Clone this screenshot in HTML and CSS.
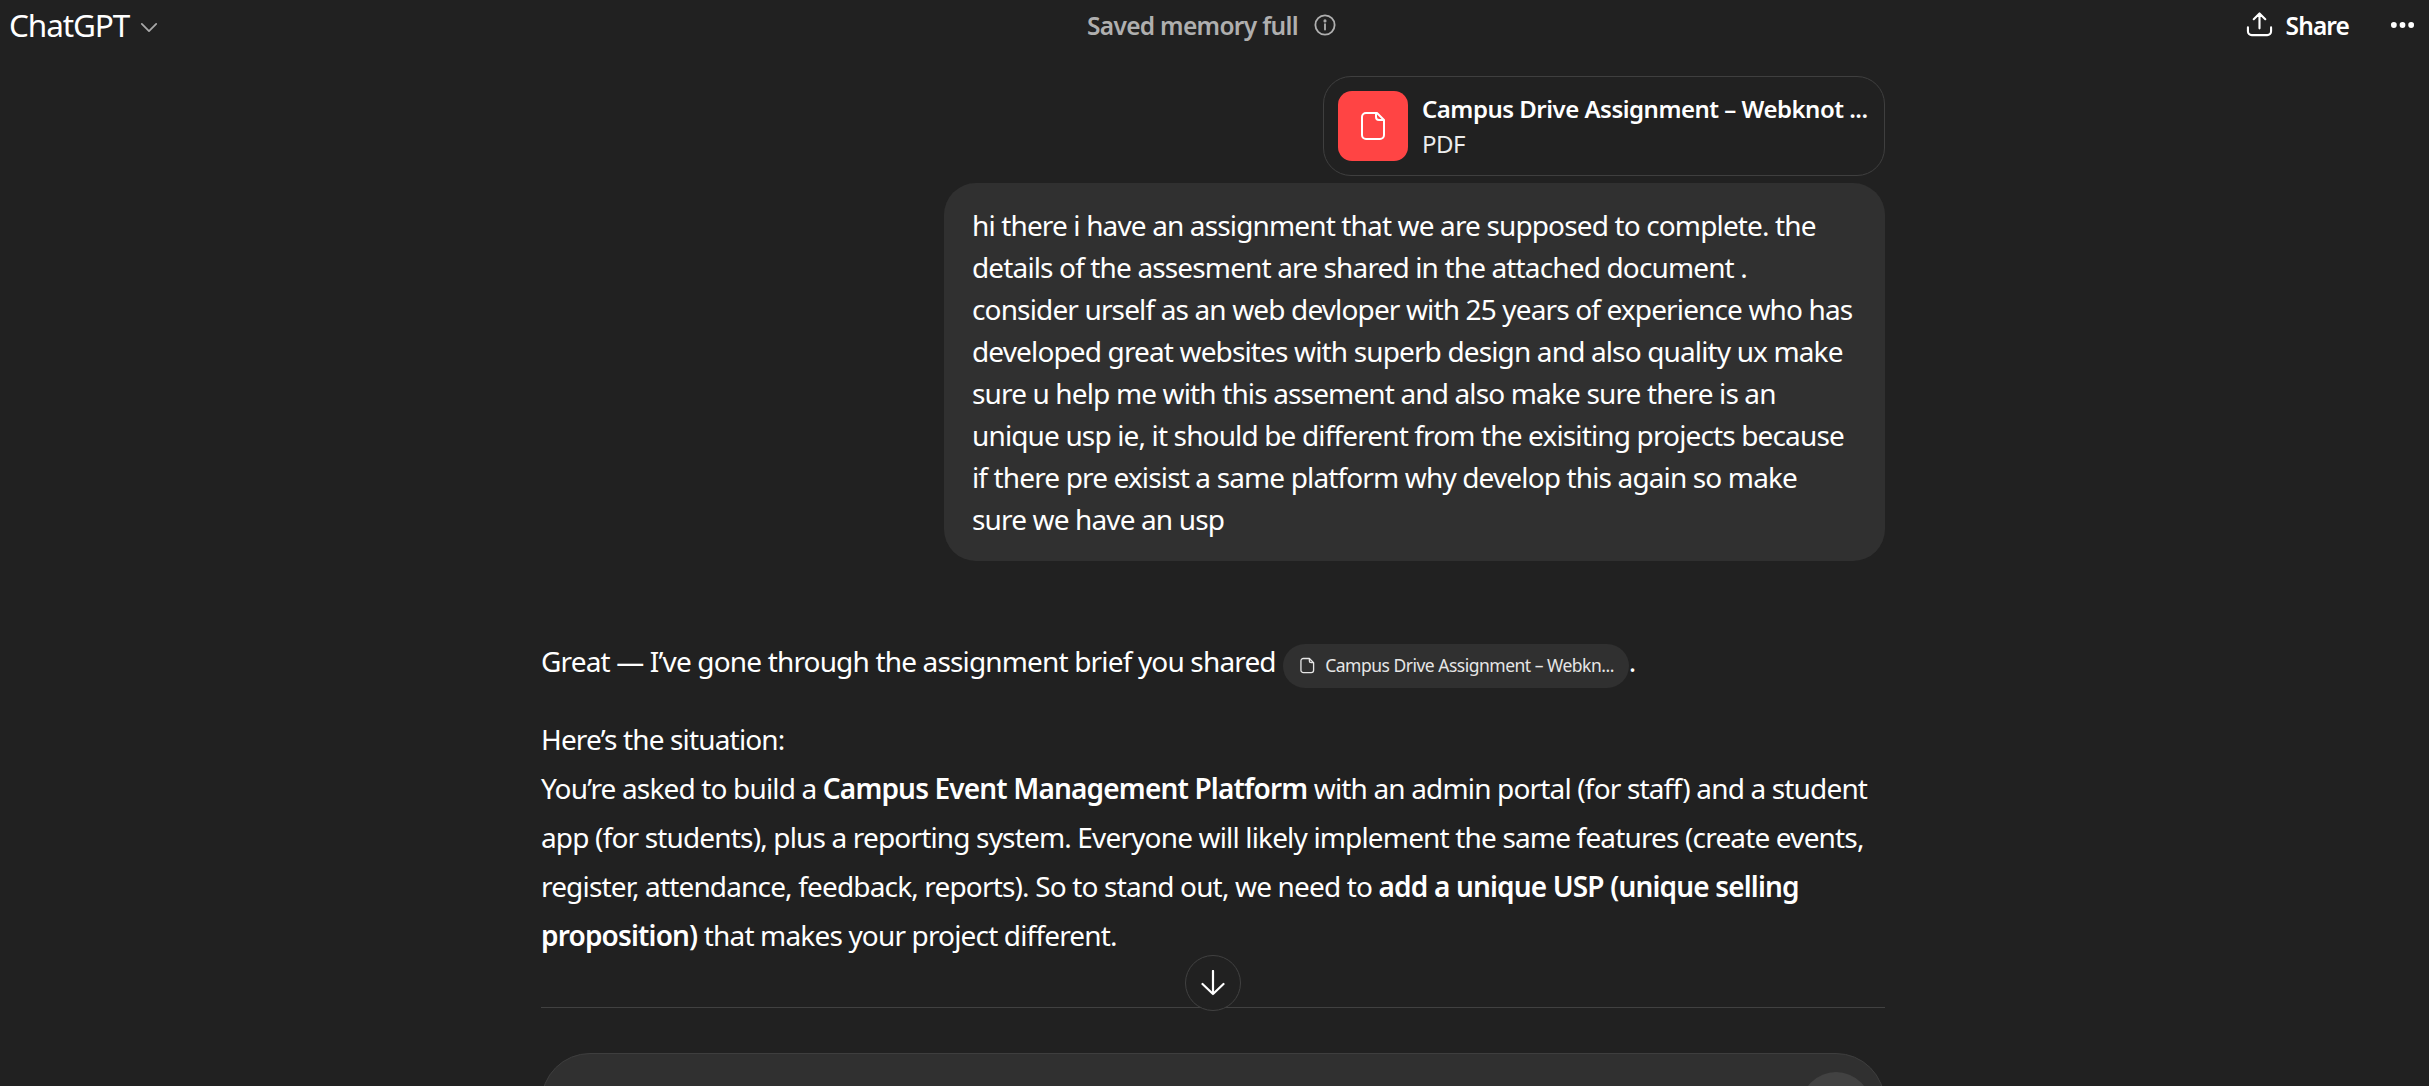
FILE: index.html
```html
<!DOCTYPE html>
<html lang="en">
<head>
<meta charset="utf-8">
<title>ChatGPT</title>
<link rel="stylesheet" href="styles.css">
</head>
<body>
<header class="topbar">
  <div class="model">
    <span>ChatGPT</span>
    <svg class="chevron" viewBox="0 0 20 12" fill="none" stroke="currentColor" stroke-width="2" stroke-linecap="round" stroke-linejoin="round"><path d="M2 2l8 8 8-8"/></svg>
  </div>
  <div class="memory">
    <span>Saved memory full</span>
    <svg class="info" viewBox="0 0 24 24" fill="none" stroke="currentColor" stroke-width="2" stroke-linecap="round"><circle cx="12" cy="12" r="10.500"/><path d="M12 11v6"/><circle cx="12" cy="7.500" r=".7" fill="currentColor"/></svg>
  </div>
  <div class="actions">
    <svg class="share-icon" viewBox="0 0 28 28" fill="none" stroke="currentColor" stroke-width="2.200" stroke-linecap="round" stroke-linejoin="round"><path d="M14 18V3M8 8.500L14 2.500l6 6M2 17v4a4 4 0 0 0 4 4h16a4 4 0 0 0 4-4v-4"/></svg>
    <span class="share">Share</span>
    <svg class="dots" viewBox="0 0 26 8" fill="currentColor"><circle cx="4" cy="4" r="3"/><circle cx="13" cy="4" r="3"/><circle cx="22" cy="4" r="3"/></svg>
  </div>
</header>
<main class="thread">
  <section class="user">
    <div class="attachment">
      <div class="file-badge">
        <svg viewBox="0 0 26 30" fill="none" stroke="#fff" stroke-width="2" stroke-linejoin="round"><path d="M6 2h11l7 7v15a4 4 0 0 1-4 4H6a4 4 0 0 1-4-4V6a4 4 0 0 1 4-4z"/><path d="M16 2v4a3 3 0 0 0 3 3h5"/></svg>
      </div>
      <div class="file-meta">
        <div class="file-name">Campus Drive Assignment – Webknot ...</div>
        <div class="file-type">PDF</div>
      </div>
    </div>
    <div class="bubble">hi there i have an assignment that we are supposed to complete. the<br>details of the assesment are shared in the attached document .<br>consider urself as an web devloper with 25 years of experience who has<br>developed great websites with superb design and also quality ux make<br>sure u help me with this assement and also make sure there is an<br>unique usp ie, it should be different from the exisiting projects because<br>if there pre exisist a same platform why develop this again so make<br>sure we have an usp</div>
  </section>
  <section class="assistant">
    <p class="para">Great — I’ve gone through the assignment brief you shared <span class="chip"><svg viewBox="0 0 16 18" fill="none" stroke="currentColor" stroke-width="1.400" stroke-linejoin="round"><path d="M3.500 1.500h6.500l4.500 4.500v8a2.500 2.500 0 0 1-2.500 2.500H3.500A2.500 2.500 0 0 1 1 14V4a2.500 2.500 0 0 1 2.500-2.500z"/><path d="M10 1.500v2.500a2 2 0 0 0 2 2h2.500"/></svg>Campus Drive Assignment – Webkn...</span>.</p>
    <p class="para">Here’s the situation:<br>You’re asked to build a <strong>Campus Event Management Platform</strong> with an admin portal (for staff) and a student<br>app (for students), plus a reporting system. Everyone will likely implement the same features (create events,<br>register, attendance, feedback, reports). So to stand out, we need to <strong>add a unique USP (unique selling<br>proposition)</strong> that makes your project different.</p>
  </section>
  <div class="divider">
    <button class="scroll-down" aria-label="Scroll down">
      <svg viewBox="0 0 24 26" fill="none" stroke="currentColor" stroke-width="2.200" stroke-linecap="round" stroke-linejoin="round"><path d="M12 1v23M1.500 14L12 24l10.500-10"/></svg>
    </button>
  </div>
  <div class="composer"><span class="send"></span></div>
</main>
</body>
</html>
```
FILE: styles.css
```css
* { box-sizing: border-box; }
html, body { height: 100%; }
body {
  margin: 0;
  height: 1086px;
  overflow: hidden;
  background: #212121;
  color: #fff;
  font-family: "Noto Sans", "Open Sans", sans-serif;
}
.topbar {
  height: 50px;
  padding: 0 14px 0 9px;
  display: grid;
  grid-template-columns: 1fr auto 1fr;
  align-items: center;
}
.model {
  display: flex;
  align-items: center;
  gap: 11px;
  font-size: 31.500px;
  line-height: 50px;
  letter-spacing: -1.1px;
}
.chevron { width: 18px; height: 11px; color: #a8a8a8; margin-top: 4px; }
.memory {
  display: flex;
  align-items: center;
  gap: 16px;
  padding-right: 1px;
  font-size: 24.500px;
  font-weight: 600;
  color: #afafaf;
  letter-spacing: -0.7px;
}
.info { width: 22px; height: 22px; }
.actions { display: flex; align-items: center; justify-content: flex-end; }
.share-icon { width: 27px; height: 27px; margin-right: 13px; margin-top: -1px; }
.share { font-size: 24.500px; font-weight: 600; letter-spacing: -0.9px; margin-right: 41px; }
.dots { width: 25px; height: 8px; }
.thread {
  width: 1344px;
  margin: 0 0 0 541px;
  padding-top: 26px;
  display: flex;
  flex-direction: column;
}
.user { display: flex; flex-direction: column; align-items: flex-end; gap: 7px; }
.attachment {
  width: 562px;
  height: 100px;
  display: flex;
  align-items: center;
  gap: 14px;
  padding: 0 14px;
  border: 1px solid #3f3f3f;
  border-radius: 28px;
}
.file-badge {
  width: 70px;
  height: 70px;
  flex: none;
  display: flex;
  align-items: center;
  justify-content: center;
  background: #ff4444;
  border-radius: 14px;
}
.file-badge svg { width: 26px; height: 30px; }
.file-meta { min-width: 0; font-size: 24px; line-height: 35px; letter-spacing: -0.5px; white-space: nowrap; }
.file-name { font-weight: 600; }
.file-type { color: #ececec; }
.bubble {
  width: 941px;
  padding: 21px 29px 21px 28px;
  background: #303030;
  border-radius: 32px;
  font-size: 28px;
  line-height: 42px;
  letter-spacing: -0.86px;
  white-space: nowrap;
}
.assistant { margin-top: 76px; }
.para {
  margin: 0 0 29px;
  font-size: 28px;
  line-height: 49px;
  letter-spacing: -0.84px;
  white-space: nowrap;
}
.para strong { font-weight: 600; }
.chip {
  display: inline-flex;
  align-items: center;
  gap: 10px;
  height: 44px;
  padding: 0 15px 0 17px;
  margin-left: 1px;
  margin-bottom: -7px;
  vertical-align: -2px;
  background: #303030;
  border-radius: 22px;
  color: #e6e6e6;
  font-size: 17.500px;
  letter-spacing: -0.5px;
}
.chip svg { width: 15px; height: 17px; }
.divider {
  margin-top: 18px;
  height: 1px;
  background: #414141;
  position: relative;
}
.scroll-down {
  position: absolute;
  left: 644px;
  top: -52px;
  width: 56px;
  height: 56px;
  display: flex;
  align-items: center;
  justify-content: center;
  padding: 0;
  background: #212121;
  border: 1px solid #414141;
  border-radius: 50%;
  color: #fff;
}
.scroll-down svg { width: 24px; height: 26px; }
.composer {
  margin-top: 45px;
  height: 120px;
  padding: 18px 13px 0 0;
  display: flex;
  justify-content: flex-end;
  background: #303030;
  border: 1px solid #3e3e3e;
  border-radius: 49px;
}
.send { width: 70px; height: 70px; background: #424242; border-radius: 50%; }
```
